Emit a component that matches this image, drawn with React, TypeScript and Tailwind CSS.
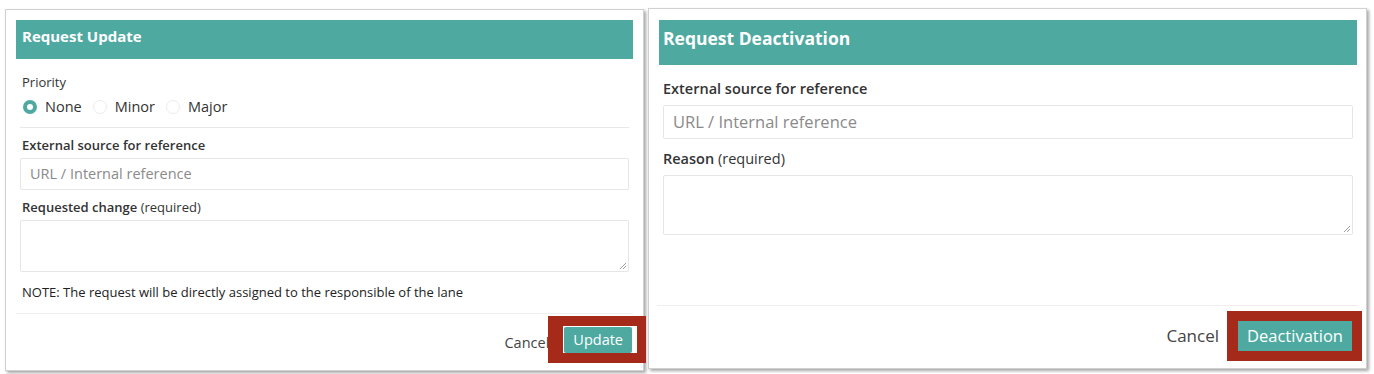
import React from "react";

const font = { fontFamily: '"Open Sans", "Liberation Sans", sans-serif' };

function Radio({ checked, label }: { checked?: boolean; label: string }) {
  return (
    <div className="flex items-center mr-[11px]">
      {checked ? (
        <span className="w-[14px] h-[14px] rounded-full border-[4px] border-[#4ea9a1] bg-white mr-[8px] box-border" />
      ) : (
        <span className="w-[14px] h-[14px] rounded-full border border-[#ececec] bg-white mr-[8px] box-border" />
      )}
      <span className="text-[14.5px] text-[#333]">{label}</span>
    </div>
  );
}

function Grip() {
  return (
    <svg className="absolute right-[2px] bottom-[2px]" width="7" height="7" viewBox="0 0 7 7">
      <line x1="1" y1="7" x2="7" y2="1" stroke="#888" strokeWidth="0.8" />
      <line x1="4" y1="7" x2="7" y2="4" stroke="#888" strokeWidth="0.8" />
    </svg>
  );
}

export default function App() {
  return (
    <div className="w-[1374px] h-[374px] bg-white relative overflow-hidden" style={font}>
      <div className="flex items-start pt-[9px] pl-[5px] gap-[4px]">
        {/* Left panel */}
        <div className="w-[639px] h-[362px] bg-white border border-[#d0d0d0] shadow-[2px_2px_3px_rgba(0,0,0,0.35)] flex flex-col">
          <div className="mx-[10px] mt-[10px] h-[39px] bg-[#4ea9a1] flex items-center px-[6px] pb-[6px]">
            <span className="text-white font-bold text-[15px]">Request Update</span>
          </div>
          <div className="px-[14px] pt-[14px]">
            <div className="pl-[2px] text-[13px] text-[#333] leading-[18px]">Priority</div>
            <div className="flex items-center pl-[3px] mt-[6px] h-[20px]">
              <Radio checked label="None" />
              <Radio label="Minor" />
              <Radio label="Major" />
            </div>
            <div className="h-px bg-[#e8e8e8] mt-[10px]" />
            <div className="pl-[2px] mt-[8px] text-[13px] font-semibold text-[#333] leading-[18px]">External source for reference</div>
            <div className="mt-[4px] h-[32px] border border-[#e6e6e6] rounded-[2px] flex items-center px-[9px]">
              <span className="text-[14.5px] text-[#8a8a8a]">URL / Internal reference</span>
            </div>
            <div className="pl-[2px] mt-[8px] text-[13px] text-[#333] leading-[18px]">
              <span className="font-semibold">Requested change</span> (required)
            </div>
            <div className="mt-[4px] h-[52px] border border-[#e6e6e6] rounded-[2px] relative">
              <Grip />
            </div>
            <div className="pl-[2px] mt-[11px] text-[13px] text-[#222] leading-[18px]">
              NOTE: The request will be directly assigned to the responsible of the lane
            </div>
          </div>
          <div className="h-px bg-[#eeeeee] mx-[10px] mt-[12px]" />
          <div className="flex justify-end items-center mt-[2px] -mr-[3px]">
            <span className="text-[14.5px] text-[#444] mr-[-1px] pt-[6px]">Cancel</span>
            <div className="bg-[#a52a1a] pl-[15px] pr-[9px] pt-[10px] pb-[10px] flex relative">
              <div className="bg-white pl-[1px] pr-[5px] pt-[1px]">
                <div className="bg-[#4ea9a1] rounded-[2px] h-[26px] px-[9px] flex items-center">
                  <span className="text-white text-[14.5px]">Update</span>
                </div>
              </div>
            </div>
          </div>
        </div>

        {/* Right panel */}
        <div className="w-[719px] h-[361px] -mt-[1px] bg-white border border-[#d0d0d0] shadow-[2px_2px_3px_rgba(0,0,0,0.35)] flex flex-col">
          <div className="ml-[10px] mr-[9px] mt-[11px] h-[45px] bg-[#4ea9a1] flex items-center px-[4px] pb-[8px]">
            <span className="text-white font-bold text-[17.5px]">Request Deactivation</span>
          </div>
          <div className="pl-[14px] pr-[13px] pt-[14px]">
            <div className="text-[14.5px] font-semibold text-[#333] leading-[20px]">External source for reference</div>
            <div className="mt-[6px] h-[34px] border border-[#e6e6e6] rounded-[2px] flex items-center px-[9px]">
              <span className="text-[16.5px] text-[#8a8a8a]">URL / Internal reference</span>
            </div>
            <div className="mt-[10px] text-[14.5px] text-[#333] leading-[20px]">
              <span className="font-semibold">Reason</span> (required)
            </div>
            <div className="mt-[6px] h-[60px] border border-[#e6e6e6] rounded-[2px] relative">
              <Grip />
            </div>
          </div>
          <div className="h-px bg-[#eeeeee] mx-[8px] mt-[70px]" />
          <div className="flex justify-end items-center pr-[4px] mt-[5px]">
            <span className="text-[17px] text-[#444] mr-[8px]">Cancel</span>
            <div className="bg-[#a52a1a] pl-[11px] pr-[10px] py-[10px] flex">
              <div className="bg-[#4ea9a1] h-[30px] w-[114px] flex items-center justify-center">
                <span className="text-white text-[16.5px]">Deactivation</span>
              </div>
            </div>
          </div>
        </div>
      </div>
    </div>
  );
}
